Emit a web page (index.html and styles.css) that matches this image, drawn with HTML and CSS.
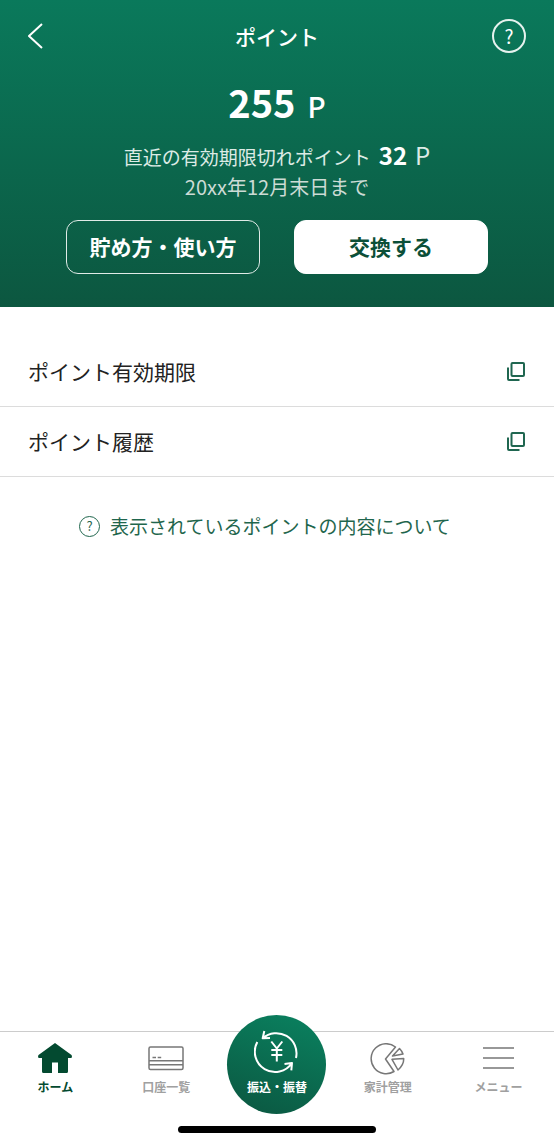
FILE: index.html
```html
<!DOCTYPE html>
<html lang="ja">
<head>
<meta charset="utf-8">
<meta name="viewport" content="width=device-width, initial-scale=1">
<title>ポイント</title>
<link rel="stylesheet" href="styles.css">
</head>
<body>
<div class="screen">
  <header class="hero">
    <div class="topbar">
      <button class="icon-button" type="button" aria-label="戻る">
        <svg class="back-icon" viewBox="0 0 16 28" aria-hidden="true"><path d="M14 2 1 14l13 12"/></svg>
      </button>
      <h1 class="title">ポイント</h1>
      <button class="help-button" type="button" aria-label="ヘルプ">?</button>
    </div>
    <p class="balance"><strong class="balance-value">255</strong><span class="balance-unit">P</span></p>
    <p class="expiry"><span>直近の有効期限切れポイント</span><strong class="expiry-value">32</strong><span class="expiry-unit">P</span></p>
    <p class="expiry-date">20xx年12月末日まで</p>
    <div class="actions">
      <button class="action action-outline" type="button">貯め方・使い方</button>
      <button class="action action-solid" type="button">交換する</button>
    </div>
  </header>

  <main class="content">
    <ul class="links">
      <li><a class="link-row" href="#expiry">ポイント有効期限
        <svg class="window-icon" viewBox="0 0 20 20" aria-hidden="true"><rect x="5.500" y="2" width="12.500" height="13" rx="1"/><path d="M2 6.500V18q0 1 1 1h10.500"/></svg></a></li>
      <li><a class="link-row" href="#history">ポイント履歴
        <svg class="window-icon" viewBox="0 0 20 20" aria-hidden="true"><rect x="5.500" y="2" width="12.500" height="13" rx="1"/><path d="M2 6.500V18q0 1 1 1h10.500"/></svg></a></li>
    </ul>
    <a class="about" href="#about"><span class="about-mark" aria-hidden="true">?</span>表示されているポイントの内容について</a>
  </main>

  <nav class="tabs" aria-label="メイン">
    <div class="tab-list">
      <a class="tab tab-current" href="#home" aria-current="page">
        <svg class="tab-icon tab-icon-fill" viewBox="0 0 36 34" aria-hidden="true"><path d="M18 0 34.500 12q1 1 0 3H31v13.500q0 1.500-1.500 1.500H21V19.500h-6V30H6.500Q5 30 5 28.500V15H1.500q-1-2 0-3Z"/></svg>
        <span>ホーム</span>
      </a>
      <a class="tab" href="#accounts">
        <svg class="tab-icon" viewBox="0 0 36 34" aria-hidden="true"><rect x="1" y="4" width="34" height="22.500" rx="1.500"/><path d="M1 17.800h34M1 21.800h34M4.500 14.500h3.500M9.700 14.500h3.500"/></svg>
        <span>口座一覧</span>
      </a>
      <a class="tab tab-main" href="#transfer">
        <span class="transfer">
          <svg class="transfer-icon" viewBox="0 0 46 46" aria-hidden="true">
            <path d="M3.300 14A20.300 20.300 0 0 0 38 35M42 30A20.300 20.300 0 0 0 8.700 10.300M10.300 3 8.700 10.300 16 10M30.500 36 38 35 37.300 42.300"/>
            <path d="m17.300 13.500 5.500 7 5.500-7M22.800 20.500v13M17.300 22h11M17.300 27h11"/>
          </svg>
          <span>振込・振替</span>
        </span>
      </a>
      <a class="tab" href="#budget">
        <svg class="tab-icon" viewBox="0 0 36 34" aria-hidden="true"><path d="M25.500 4A15 15 0 1 0 24 28.500L15.500 16ZM22.500 13 29.500 5.500Q32 8 33 11ZM22 16.300 33.700 15.500Q34 22 28 27Z"/></svg>
        <span>家計管理</span>
      </a>
      <a class="tab" href="#menu">
        <svg class="tab-icon" viewBox="0 0 36 34" aria-hidden="true"><path d="M2 5h31M2 15h31M2 25h31"/></svg>
        <span>メニュー</span>
      </a>
    </div>
    <div class="home-bar"></div>
  </nav>
</div>
</body>
</html>
```
FILE: styles.css
```css
* {
  box-sizing: border-box;
}

body {
  margin: 0;
  background: #fff;
  color: #222;
  font-family: "Noto Sans CJK JP", sans-serif;
}

h1, p, ul {
  margin: 0;
  padding: 0;
}

ul {
  list-style: none;
}

a {
  color: inherit;
  text-decoration: none;
}

button {
  font-family: inherit;
  cursor: pointer;
}

svg {
  fill: none;
  stroke: currentColor;
  stroke-linejoin: round;
}

.screen {
  display: flex;
  flex-direction: column;
  min-height: 100vh;
}

.hero {
  padding: 18px 28px 33px;
  background: linear-gradient(#0a795b, #0c5740);
  color: #fff;
  text-align: center;
}

.topbar {
  display: grid;
  grid-template-columns: 34px 1fr 34px;
  align-items: center;
  height: 36px;
}

.icon-button {
  display: flex;
  padding: 0;
  border: 0;
  background: none;
  color: #fff;
}

.back-icon {
  width: 16px;
  height: 28px;
  stroke-width: 2;
}

.title {
  font-size: 21px;
  font-weight: 500;
  line-height: 34px;
}

.help-button {
  width: 34px;
  height: 34px;
  padding: 0;
  border: 2px solid #e6f2ee;
  border-radius: 50%;
  background: none;
  color: #fff;
  font-size: 19px;
  line-height: 28px;
}

.balance {
  display: flex;
  justify-content: center;
  align-items: baseline;
  gap: 12px;
  margin-top: 20px;
  line-height: 56px;
}

.balance-value {
  font-size: 38px;
  font-weight: 700;
}

.balance-unit {
  font-size: 28px;
  font-weight: 500;
}

.expiry {
  display: flex;
  justify-content: center;
  align-items: baseline;
  gap: 8px;
  margin-top: 6px;
  color: #dcebe5;
  font-size: 19px;
  line-height: 30px;
}

.expiry-value {
  color: #fff;
  font-size: 24px;
}

.expiry-unit {
  font-size: 24px;
}

.expiry-date {
  color: #ccdbd5;
  font-size: 20px;
  line-height: 30px;
}

.actions {
  display: grid;
  grid-template-columns: 1fr 1fr;
  gap: 34px;
  margin-top: 18px;
  padding: 0 38px;
}

.action {
  height: 54px;
  padding: 0 0 2px;
  border: 1px solid #e0ebe7;
  border-radius: 12px;
  font-size: 21px;
  font-weight: 700;
  white-space: nowrap;
}

.action-outline {
  background: none;
  color: #fff;
}

.action-solid {
  border-color: #fff;
  background: #fff;
  color: #0c4f38;
}

.content {
  flex: 1;
  padding-top: 30px;
}

.link-row {
  display: flex;
  justify-content: space-between;
  align-items: center;
  height: 70px;
  padding: 0 28px 2px;
  border-bottom: 1px solid #dcdcdc;
  font-size: 21px;
}

.window-icon {
  width: 20px;
  height: 20px;
  color: #1f6650;
  stroke-width: 2;
}

.about {
  display: flex;
  align-items: center;
  gap: 10px;
  width: fit-content;
  margin: 34px 0 0 79px;
  color: #1f664d;
  font-size: 19px;
  line-height: 30px;
  white-space: nowrap;
}

.about-mark {
  width: 21px;
  height: 21px;
  border: 1px solid currentColor;
  border-radius: 50%;
  font-size: 13px;
  line-height: 18px;
  text-align: center;
}

.tabs {
  border-top: 1px solid #ccc;
  padding-bottom: 10px;
}

.tab-list {
  display: grid;
  grid-template-columns: repeat(5, 1fr);
  height: 94px;
}

.tab {
  display: flex;
  flex-direction: column;
  align-items: center;
  padding-top: 11px;
  color: #a0a0a0;
  font-size: 12px;
  font-weight: 700;
  line-height: 20px;
  white-space: nowrap;
}

.tab-current {
  color: #034a30;
}

.tab-icon {
  width: 36px;
  height: 34px;
  color: #777;
  stroke-width: 1.5;
}

.tab-icon-fill {
  color: #034a30;
  fill: currentColor;
  stroke: none;
}

.tab-main {
  padding: 0;
  color: #fff;
}

.transfer {
  display: flex;
  flex-direction: column;
  align-items: center;
  width: 99px;
  height: 99px;
  margin-top: -17px;
  padding-top: 13px;
  border-radius: 50%;
  background: linear-gradient(200deg, #0a8260, #0b5640);
}

.transfer-icon {
  width: 46px;
  height: 46px;
  margin-bottom: 3px;
  stroke-width: 2;
}

.home-bar {
  width: 198px;
  height: 7px;
  margin: 0 auto;
  border-radius: 4px;
  background: #000;
}
```
